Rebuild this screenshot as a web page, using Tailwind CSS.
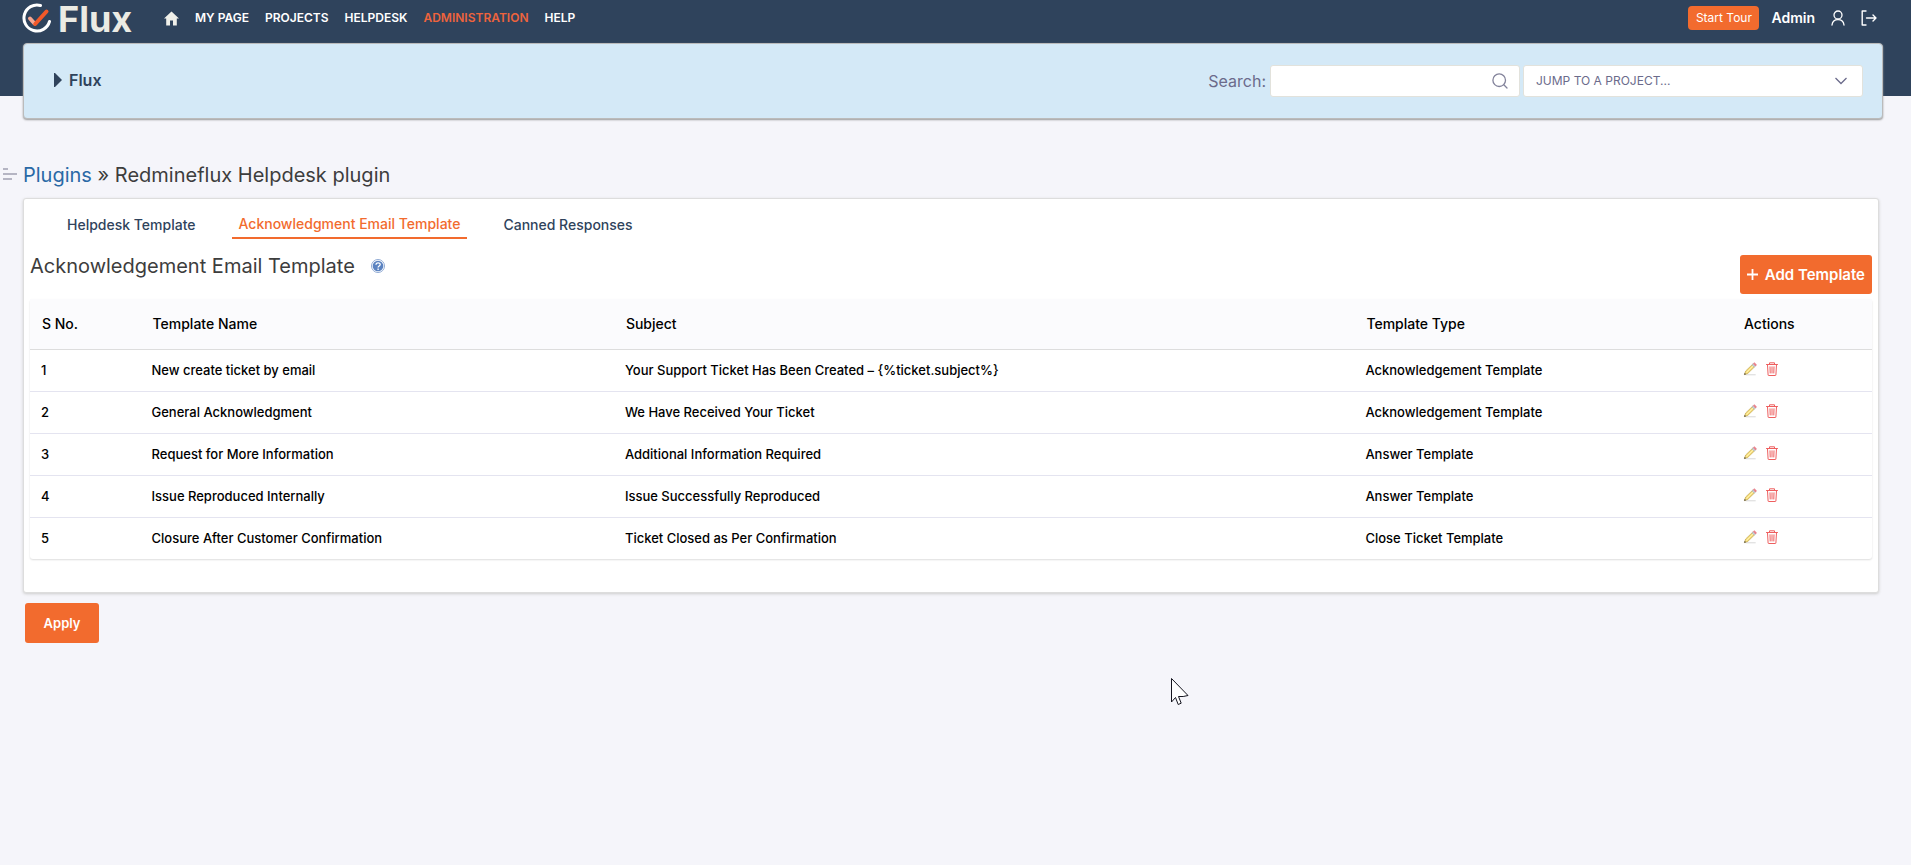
<!DOCTYPE html>
<html lang="en">
<head>
  <meta charset="UTF-8">
  <title>Redmineflux Helpdesk plugin - Flux</title>
  <script src="https://cdn.jsdelivr.net/npm/@tailwindcss/browser@4"></script>
</head>
<body class="relative min-h-screen bg-[#f5f5fa] font-['Inter','Liberation_Sans',sans-serif] text-sm text-black">
  <svg width="0" height="0" class="absolute">
    <defs>
      <symbol id="pencil" viewBox="0 0 16 16">
        <path d="M3 14.5h11.5" stroke="#e3e3e3" stroke-width="1.6"/>
        <path d="M1.5 14.5 3 10.300 11 2.600 13.600 5.200 5.500 13z" fill="#f6de7c" stroke="#b89b45" stroke-width=".7"/>
        <path d="M4 12 12 4" stroke="#fff3b8" stroke-width="1"/>
        <path d="M10.200 3.300 11.500 2 14.200 4.700 12.900 6z" fill="#cdd3dc" stroke="#9aa2ad" stroke-width=".5"/>
        <path d="M11.700 1.800 13 .8 15.500 3.200 14.400 4.500z" fill="#f0808c" stroke="#d9626f" stroke-width=".5"/>
        <path d="M1.300 14.700 2 12.500 3.500 14z" fill="#3a3a3a"/>
      </symbol>
      <symbol id="trash" viewBox="0 0 12 14">
        <g fill="none" stroke="#ee5f5f" stroke-width="1" stroke-linecap="round" stroke-linejoin="round">
          <path d="M.5 2.500h11M3.500 2.300V.8h5v1.500M1.500 2.700l.6 10.300q0 .5.5.5h6.800q.5 0 .5-.5l.6-10.300M4 4.800l.2 6.200M6 4.800V11M8 4.800 7.800 11"/>
        </g>
      </symbol>
    </defs>
  </svg>

  <header class="h-24 bg-[#2f435c] px-[22px] text-white">
    <div class="flex h-9 items-center">
      <a href="#" class="flex w-[142px] items-center gap-[6px]">
        <svg class="h-[30px] w-[30px]" viewBox="0 0 30 30" fill="none" stroke-linecap="round" stroke-linejoin="round">
          <path d="M18.500 2.500A13 13 0 1 0 27.500 18.500" stroke="#fff" stroke-width="3"/>
          <path d="M8 15.500l4.500 5" stroke="#f7a690" stroke-width="4"/>
          <path d="M13.200 21 24.500 8.500" stroke="#f2592a" stroke-width="4"/>
        </svg>
        <span class="pt-[2px] text-4xl font-bold text-[#ebebe4]">Flux</span>
      </a>
      <nav class="flex items-center gap-4 text-xs font-semibold">
        <a href="#" aria-label="Home">
          <svg class="h-[15px] w-[15px]" viewBox="0 0 15 14"><path d="M7.500 0 15 7h-2.200v7H9V9H6v5H2.200V7H0z" fill="#f0f0ea"/></svg>
        </a>
        <a href="#">MY PAGE</a>
        <a href="#">PROJECTS</a>
        <a href="#">HELPDESK</a>
        <a href="#" class="text-[#ee633c]">ADMINISTRATION</a>
        <a href="#">HELP</a>
      </nav>
      <div class="ml-auto flex items-center gap-3 pr-3">
        <button class="h-6 w-[71px] rounded bg-[#f26b2e] text-xs">Start Tour</button>
        <a href="#" class="font-semibold">Admin</a>
        <a href="#" class="ml-1" aria-label="Account">
          <svg class="h-4 w-[14px]" viewBox="0 0 14 16" fill="none" stroke="#fff" stroke-width="1.300" stroke-linecap="round"><circle cx="7" cy="5" r="4"/><path d="M1 15c.4-3.500 2.500-5.300 6-5.300s5.600 1.800 6 5.300"/></svg>
        </a>
        <a href="#" aria-label="Sign out">
          <svg class="ml-1 h-4 w-4" viewBox="0 0 16 16" fill="none" stroke="#fff" stroke-width="1.400" stroke-linecap="round" stroke-linejoin="round"><path d="M5 1H1.200v14H5M5.500 8H15M12 5l3 3-3 3"/></svg>
        </a>
      </div>
    </div>
  </header>

  <section class="relative -mt-[53px] mr-7 ml-[23px] flex h-[76px] items-center rounded border border-[#bbb] bg-[#d4e9f7] pr-[19px] pl-[30px] shadow-[0_1px_2px_#999]">
    <h1 class="flex items-center gap-[7px] pb-[2px] text-base font-semibold text-[#2f435c]">
      <svg class="h-[14px] w-2" viewBox="0 0 8 14"><path d="M0 0h1l7 7-7 7H0z" fill="#2f435c"/></svg>
      Flux
    </h1>
    <form class="ml-auto flex items-center">
      <label for="q" class="mr-1 text-base text-[#6b6b8b]">Search:</label>
      <div class="relative mr-[3px]">
        <input id="q" type="text" class="h-8 w-[250px] rounded-[3px] border border-[#e2e2dc] bg-white px-3">
        <svg class="absolute top-2 right-3 h-4 w-4" viewBox="0 0 16 16" fill="none" stroke="#83839b" stroke-width="1.300" stroke-linecap="round"><circle cx="7.200" cy="7.200" r="6.300"/><path d="M11.800 11.800 15 15"/></svg>
      </div>
      <div class="relative">
        <select aria-label="Jump to a project" class="h-8 w-[340px] appearance-none rounded-[3px] border border-[#e2e2dc] bg-white px-3 text-xs text-[#6b6b8b]">
          <option>JUMP TO A PROJECT...</option>
        </select>
        <svg class="pointer-events-none absolute top-3 right-4 h-2 w-3" viewBox="0 0 12 8" fill="none" stroke="#6b6b8b" stroke-width="1.300"><path d="M.5 1 6 6.500 11.500 1"/></svg>
      </div>
    </form>
  </section>

  <main class="mt-10 pr-8 pb-6">
    <div class="flex h-8 items-center pl-[3px]">
      <button aria-label="Toggle menu" class="mr-[6px] pb-[2px]">
        <svg class="h-3 w-[14px]" viewBox="0 0 14 12" stroke="#77778c" stroke-width="1.200"><path d="M0 1h5M0 6h14M0 11h9"/></svg>
      </button>
      <h2 class="text-xl text-[#3d3d3d]"><a href="#" class="text-[#2a69a6]">Plugins</a> » Redmineflux Helpdesk plugin</h2>
    </div>

    <div class="mt-[7px] ml-[23px] rounded-[3px] border border-[#ddd] bg-white px-[6px] pb-[33px] shadow-[0_1px_3px_#ccc]">
      <div class="flex gap-[29px] pt-[13px] pl-[30px] font-medium text-[#2f435c]">
        <a href="#" class="h-[27px] px-[7px] pt-[3px]">Helpdesk Template</a>
        <a href="#" class="h-[27px] border-b-2 border-[#f26b2e] px-[7px] pt-[2px] text-[#f26b2e]">Acknowledgment Email Template</a>
        <a href="#" class="h-[27px] px-[7px] pt-[3px]">Canned Responses</a>
      </div>

      <div class="flex h-[60px] items-start justify-between pt-[13px]">
        <h3 class="flex items-center gap-4 text-xl text-[#3d3d3d]">
          Acknowledgement Email Template
          <svg class="h-[14px] w-[14px]" viewBox="0 0 14 14">
            <circle cx="7" cy="7" r="6.500" fill="#fff" stroke="#8fa9d3"/>
            <circle cx="7" cy="7" r="5.300" fill="#5b83c1"/>
            <path d="M5 5.700C5 3.300 9.200 3.300 9.200 5.600 9.200 7 7.100 7 7.100 8.400M7.100 9.600v1.300" fill="none" stroke="#fff" stroke-width="1.300"/>
          </svg>
        </h3>
        <button class="mt-[3px] flex h-[39px] items-center gap-[7px] rounded-[3px] bg-[#f26b2e] px-[7px] text-[15px] font-semibold text-white">
          <svg class="h-[11px] w-[11px]" viewBox="0 0 11 11" stroke="#fff" stroke-width="1.800"><path d="M5.500 0v11M0 5.500h11"/></svg>
          Add Template
        </button>
      </div>

      <table class="w-full table-fixed rounded-[3px] text-left text-[13px] shadow-[0_1px_2px_#ddd]">
        <colgroup>
          <col class="w-[6%]">
          <col class="w-[25.700%]">
          <col class="w-[40.200%]">
          <col class="w-[20.500%]">
          <col>
        </colgroup>
        <thead class="bg-[#fbfbfd] text-sm">
          <tr class="h-[50px] border-b border-[#ddd]">
            <th class="px-3 font-medium">S No.</th>
            <th class="px-3 font-medium">Template Name</th>
            <th class="px-3 font-medium">Subject</th>
            <th class="px-3 font-medium">Template Type</th>
            <th class="px-3 font-medium">Actions</th>
          </tr>
        </thead>
        <tbody id="templates" class="divide-y divide-[#e4e4f0] font-medium"></tbody>
      </table>
    </div>

    <button class="mt-[10px] ml-[25px] h-10 w-[74px] rounded-[3px] bg-[#f26b2e] text-[13px] font-semibold text-white">Apply</button>
  </main>

  <!-- mouse pointer -->
  <svg class="pointer-events-none absolute top-[677px] left-[1170px] h-[29px] w-5" viewBox="0 0 20 29"><path d="M1.500 1.500V25l4-4.500 2.700 7 3-1.300L8.500 19.500h4.700L18 18.500z" fill="#fff" stroke="#15151f" stroke-width="1"/></svg>

  <script>
    const templates = [
      { name: 'New create ticket by email', subject: 'Your Support Ticket Has Been Created – {%ticket.subject%}', type: 'Acknowledgement Template' },
      { name: 'General Acknowledgment', subject: 'We Have Received Your Ticket', type: 'Acknowledgement Template' },
      { name: 'Request for More Information', subject: 'Additional Information Required', type: 'Answer Template' },
      { name: 'Issue Reproduced Internally', subject: 'Issue Successfully Reproduced', type: 'Answer Template' },
      { name: 'Closure After Customer Confirmation', subject: 'Ticket Closed as Per Confirmation', type: 'Close Ticket Template' }
    ];

    const table = document.getElementById('templates');
    templates.forEach((tpl, i) => {
      const row = document.createElement('tr');
      row.className = 'h-[42px]';
      row.innerHTML = `
        <td class="px-[11px]">${i + 1}</td>
        <td class="px-[11px]">${tpl.name}</td>
        <td class="px-[11px]">${tpl.subject}</td>
        <td class="px-[11px]">${tpl.type}</td>
        <td class="px-[11px]">
          <div class="flex items-center gap-[9px] pb-[2px]">
            <a href="#" aria-label="Edit"><svg class="h-[14px] w-[14px]"><use href="#pencil"/></svg></a>
            <a href="#" aria-label="Delete"><svg class="h-[14px] w-3"><use href="#trash"/></svg></a>
          </div>
        </td>
      `;
      table.appendChild(row);
    });
  </script>
</body>
</html>
